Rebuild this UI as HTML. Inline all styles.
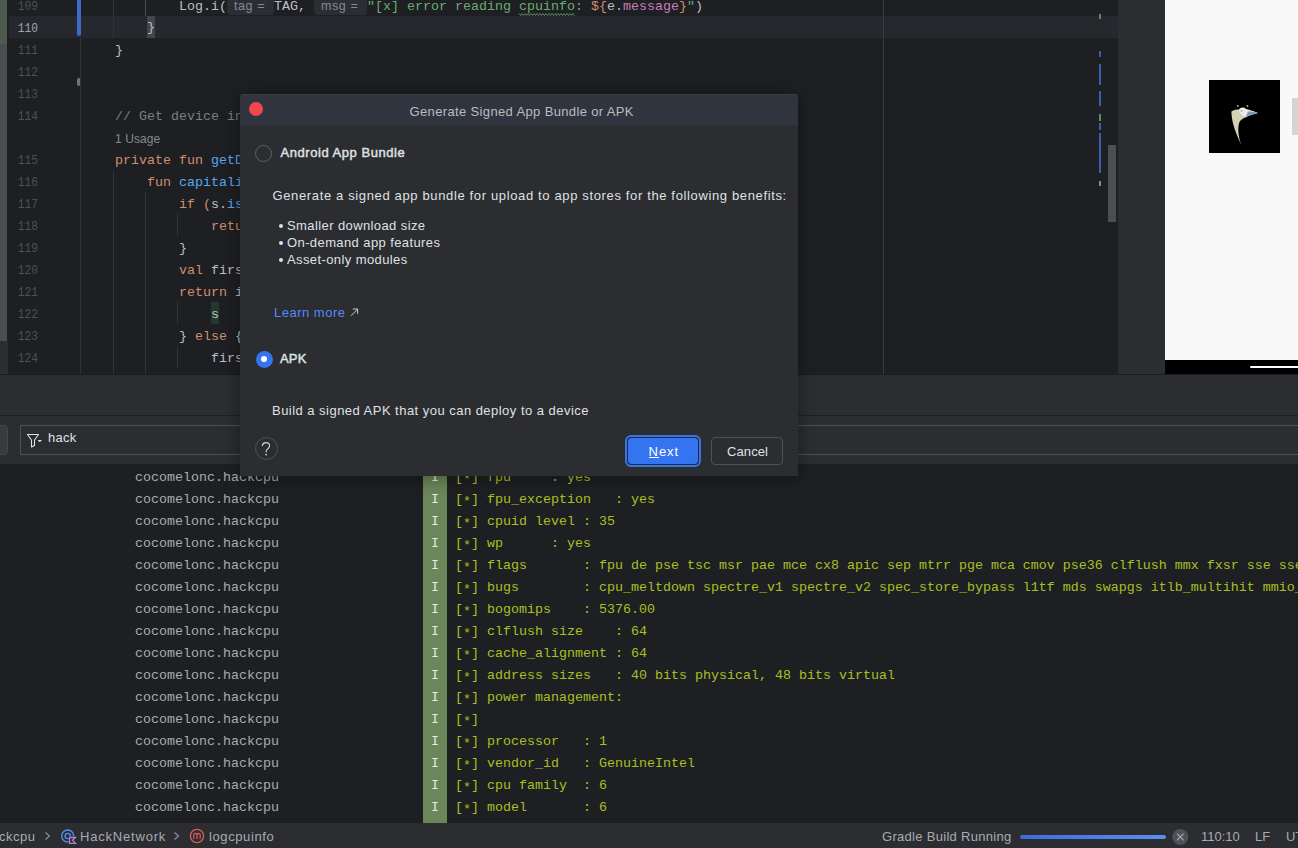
<!DOCTYPE html>
<html><head><meta charset="utf-8">
<style>
*{margin:0;padding:0;box-sizing:border-box}
html,body{width:1298px;height:848px;overflow:hidden;background:#1e1f22;font-family:"Liberation Sans",sans-serif}
.a{position:absolute}
.mono{font-family:"Liberation Mono",monospace;font-size:13.33px;white-space:pre;line-height:22px}
.ln{position:absolute;width:38px;text-align:right;font-family:"Liberation Mono",monospace;font-size:12.5px;line-height:22px;color:#4b5059;transform:scaleX(0.9);transform-origin:38px 0}
.k{color:#cf8e6d}.f{color:#56a8f5}.s{color:#6aab73}.d{color:#bcbec4}.c{color:#7a7e85}.p{color:#c77dbb}
.hint{display:inline-block;font-family:"Liberation Sans",sans-serif;font-size:12.5px;letter-spacing:0.6px;color:#868a91;background:#2c2e33;border-radius:4px;height:18px;line-height:18px;vertical-align:top;margin-top:1px;padding:0 0 0 7px}
.typo{}
.brace{display:inline-block;height:22px;width:8px;vertical-align:top;margin-top:-2px;line-height:23px;background:#43454a}
.shl{display:inline-block;height:22px;vertical-align:top;margin-top:-2px;line-height:26px;background:#203b2d}
.log{color:#a8c023}
.pkg{color:#a9abb1}
.badge{color:#e8e8e8}
.dt{position:absolute;white-space:pre;color:#dfe1e5;font-size:13px;line-height:16px}
</style></head>
<body>
<!-- EDITOR -->
<div class="a" style="left:0;top:0;width:1118px;height:374px;background:#1e1f22;overflow:hidden">
  <div class="a" style="left:0;top:0;width:7px;height:44px;background:#4d5a4d"></div>
  <div class="a" style="left:0;top:44px;width:7px;height:297px;background:#4b4d52"></div>
  <div class="a" style="left:0;top:341px;width:8px;height:33px;background:#2b2d30"></div>
  <div class="a" style="left:9px;top:16px;width:1109px;height:22px;background:#26282e"></div>
  <div class="ln" style="left:0;top:-4px;color:#4b5059">109</div>
<div class="ln" style="left:0;top:18px;color:#a1a3ab">110</div>
<div class="ln" style="left:0;top:40px;color:#4b5059">111</div>
<div class="ln" style="left:0;top:62px;color:#4b5059">112</div>
<div class="ln" style="left:0;top:84px;color:#4b5059">113</div>
<div class="ln" style="left:0;top:106px;color:#4b5059">114</div>
<div class="ln" style="left:0;top:150px;color:#4b5059">115</div>
<div class="ln" style="left:0;top:172px;color:#4b5059">116</div>
<div class="ln" style="left:0;top:194px;color:#4b5059">117</div>
<div class="ln" style="left:0;top:216px;color:#4b5059">118</div>
<div class="ln" style="left:0;top:238px;color:#4b5059">119</div>
<div class="ln" style="left:0;top:260px;color:#4b5059">120</div>
<div class="ln" style="left:0;top:282px;color:#4b5059">121</div>
<div class="ln" style="left:0;top:304px;color:#4b5059">122</div>
<div class="ln" style="left:0;top:326px;color:#4b5059">123</div>
<div class="ln" style="left:0;top:348px;color:#4b5059">124</div>
<div class="ln" style="left:0;top:370px;color:#4b5059">125</div>
  <div class="a" style="left:77px;top:0;width:4px;height:36px;background:#3d6acb;border-radius:0 0 2px 2px"></div>
  <div class="a" style="left:77px;top:78px;width:4px;height:8px;background:#6f737a;border-radius:2px"></div>
  <div class="a" style="left:80px;top:38px;width:1px;height:336px;background:#303236"></div>
  <div class="a" style="left:113px;top:0;width:1px;height:38px;background:#313338"></div>
  <div class="a" style="left:145px;top:0;width:1px;height:16px;background:#4e5055"></div>
  <div class="a" style="left:113px;top:170px;width:1px;height:204px;background:#313338"></div>
  <div class="a" style="left:145px;top:192px;width:1px;height:182px;background:#313338"></div>
  <div class="a" style="left:177px;top:214px;width:1px;height:22px;background:#313338"></div>
  <div class="a" style="left:177px;top:302px;width:1px;height:22px;background:#313338"></div>
  <div class="a" style="left:177px;top:346px;width:1px;height:22px;background:#313338"></div>
  <div class="a" style="left:883px;top:0;width:1px;height:374px;background:#393b40"></div>
  <svg class="a" style="left:0;top:0" width="600" height="20"><polyline points="519.0,13.5 520.5,15.5 522.0,13.5 523.5,15.5 525.0,13.5 526.5,15.5 528.0,13.5 529.5,15.5 531.0,13.5 532.5,15.5 534.0,13.5 535.5,15.5 537.0,13.5 538.5,15.5 540.0,13.5 541.5,15.5 543.0,13.5 544.5,15.5 546.0,13.5 547.5,15.5 549.0,13.5 550.5,15.5 552.0,13.5 553.5,15.5 555.0,13.5 556.5,15.5 558.0,13.5 559.5,15.5 561.0,13.5 562.5,15.5 564.0,13.5 565.5,15.5 567.0,13.5 568.5,15.5 570.0,13.5 571.5,15.5 573.0,13.5 574.5,15.5" fill="none" stroke="#5f9967" stroke-width="0.9"/></svg>
  <div class="a mono d" style="left:83px;top:-4px"><span class="d">            Log.i(</span><span class="hint" style="width:47px">tag =</span><span class="d">TAG, </span><span class="hint" style="width:53px">msg =</span><span class="s">&quot;[x] error reading </span><span class="s typo">cpuinfo</span><span class="s">: </span><span class="k">${</span><span class="d">e.</span><span class="p">message</span><span class="k">}</span><span class="s">&quot;</span><span class="d">)</span></div>
<div class="a mono d" style="left:83px;top:18px"><span class="d">        </span><span class="brace">}</span></div>
<div class="a mono d" style="left:83px;top:40px"><span class="d">    }</span></div>
<div class="a mono d" style="left:83px;top:62px"></div>
<div class="a mono d" style="left:83px;top:84px"></div>
<div class="a mono d" style="left:83px;top:106px"><span class="c">    // Get device in</span></div>
<div class="a" style="left:115px;top:128px;height:22px;line-height:22px;font-size:12px;color:#868a91;letter-spacing:0.1px">1 Usage</div>
<div class="a mono d" style="left:83px;top:150px"><span class="k">    private fun </span><span class="f">getD</span></div>
<div class="a mono d" style="left:83px;top:172px"><span class="k">        fun </span><span class="f">capitali</span></div>
<div class="a mono d" style="left:83px;top:194px"><span class="k">            if </span><span class="k">(</span><span class="d">s.</span><span class="f">is</span></div>
<div class="a mono d" style="left:83px;top:216px"><span class="k">                retu</span></div>
<div class="a mono d" style="left:83px;top:238px"><span class="d">            }</span></div>
<div class="a mono d" style="left:83px;top:260px"><span class="k">            val </span><span class="d">firs</span></div>
<div class="a mono d" style="left:83px;top:282px"><span class="k">            return </span><span class="d">i</span></div>
<div class="a mono d" style="left:83px;top:304px"><span class="d">                </span><span class="shl">s</span></div>
<div class="a mono d" style="left:83px;top:326px"><span class="d">            } </span><span class="k">else </span><span class="d">{</span></div>
<div class="a mono d" style="left:83px;top:348px"><span class="d">                firs</span></div>
<div class="a mono d" style="left:83px;top:370px"><span class="d">            }</span></div>
  <div class="a" style="left:1099px;top:14px;width:2px;height:5px;background:#549159"></div>
  <div class="a" style="left:1099px;top:51px;width:2px;height:6px;background:#375fad"></div>
  <div class="a" style="left:1099px;top:64px;width:2px;height:21px;background:#375fad"></div>
  <div class="a" style="left:1099px;top:91px;width:2px;height:15px;background:#375fad"></div>
  <div class="a" style="left:1099px;top:114px;width:2px;height:7px;background:#549159"></div>
  <div class="a" style="left:1099px;top:123px;width:2px;height:7px;background:#375fad"></div>
  <div class="a" style="left:1099px;top:133px;width:2px;height:40px;background:#375fad"></div>
  <div class="a" style="left:1099px;top:181px;width:2px;height:5px;background:#868a91"></div>
  <div class="a" style="left:1108px;top:145px;width:8px;height:77px;background:#4d4e51"></div>
</div>
<div class="a" style="left:1118px;top:0;width:47px;height:374px;background:#2b2d30"></div>
<div class="a" style="left:1165px;top:0;width:133px;height:374px;background:#000;overflow:hidden">
  <div class="a" style="left:0;top:0;width:133px;height:360px;background:#f9f9f9"></div>
  <svg class="a" style="left:44px;top:80px" width="71" height="73" viewBox="0 0 71 73"><rect width="71" height="73" fill="#000"/>
  <path d="M22.4 31.6 C22.5 38 24 48 32.3 64.9 C29 56 28.5 47 30.5 42 C32 39 40 35 48.6 33 C43 31 38 30 33 29.5 C29 29 25 30 22.4 31.6 Z" fill="#d3d0b4"/>
  <path d="M30 30 C31 27 35 27 37 29 C41 30 45 31 48.6 33 C44 34 40 35.5 36 37 C33 35 30 33 30 30 Z" fill="#e6ebee"/>
  <path d="M39 31.5 C43 31.5 46 32 49 33 C45 34.5 41 35.5 37 36.5 Z" fill="#7d98ac"/>
  <circle cx="32.5" cy="31" r="1" fill="#d9a0a0"/>
  <circle cx="28.8" cy="26" r="0.9" fill="#b8c040"/><circle cx="38.5" cy="26" r="0.9" fill="#b8c040"/>
</svg>
  <div class="a" style="left:127px;top:98px;width:6px;height:37px;background:#d5d5d5"></div>
  <div class="a" style="left:85px;top:366px;width:60px;height:2px;background:#fff;border-radius:1px"></div>
</div>

<!-- BOTTOM PANEL -->
<div class="a" style="left:0;top:374px;width:1298px;height:1px;background:#1b1c1f"></div>
<div class="a" style="left:0;top:375px;width:1298px;height:40px;background:#2b2d30"></div>
<div class="a" style="left:0;top:415px;width:1298px;height:1px;background:#1e1f22"></div>
<div class="a" style="left:0;top:416px;width:1298px;height:48px;background:#2b2d30"></div>
<div class="a" style="left:-6px;top:425px;width:14px;height:30px;background:#393b40;border:1px solid #43454a;border-radius:4px"></div>
<div class="a" style="left:20px;top:425px;width:1300px;height:30px;border:1px solid #4e5157"></div>
<svg class="a" style="left:25px;top:432px" width="20" height="18" viewBox="0 0 20 18">
  <path d="M2.5 2.5 H13.5 L9.5 8 V13.5 L6.5 15 V8 Z" fill="none" stroke="#dfe1e5" stroke-width="1.1" stroke-linejoin="round"/>
  <path d="M12.5 8 H17 L14.75 10.2 Z" fill="#dfe1e5"/>
</svg>
<div class="a" style="left:48px;top:430px;font-size:13px;color:#dfe1e5;line-height:16px;letter-spacing:0.3px">hack</div>

<!-- LOGCAT -->
<div class="a" style="left:0;top:464px;width:1298px;height:359px;background:#1e1f22;overflow:hidden">
  <div class="a" style="left:423px;top:0;width:24px;height:359px;background:#6a8759"></div>
  <div class="a mono pkg" style="left:135px;top:3px">cocomelonc.hackcpu</div>
<div class="a mono badge" style="left:431px;top:3px">I</div>
<div class="a mono log" style="left:455px;top:3px">[<span style="position:relative;top:2px">*</span>] fpu     : yes</div>
<div class="a mono pkg" style="left:135px;top:25px">cocomelonc.hackcpu</div>
<div class="a mono badge" style="left:431px;top:25px">I</div>
<div class="a mono log" style="left:455px;top:25px">[<span style="position:relative;top:2px">*</span>] fpu_exception   : yes</div>
<div class="a mono pkg" style="left:135px;top:47px">cocomelonc.hackcpu</div>
<div class="a mono badge" style="left:431px;top:47px">I</div>
<div class="a mono log" style="left:455px;top:47px">[<span style="position:relative;top:2px">*</span>] cpuid level : 35</div>
<div class="a mono pkg" style="left:135px;top:69px">cocomelonc.hackcpu</div>
<div class="a mono badge" style="left:431px;top:69px">I</div>
<div class="a mono log" style="left:455px;top:69px">[<span style="position:relative;top:2px">*</span>] wp      : yes</div>
<div class="a mono pkg" style="left:135px;top:91px">cocomelonc.hackcpu</div>
<div class="a mono badge" style="left:431px;top:91px">I</div>
<div class="a mono log" style="left:455px;top:91px">[<span style="position:relative;top:2px">*</span>] flags       : fpu de pse tsc msr pae mce cx8 apic sep mtrr pge mca cmov pse36 clflush mmx fxsr sse sse2 ss ht syscall nx</div>
<div class="a mono pkg" style="left:135px;top:113px">cocomelonc.hackcpu</div>
<div class="a mono badge" style="left:431px;top:113px">I</div>
<div class="a mono log" style="left:455px;top:113px">[<span style="position:relative;top:2px">*</span>] bugs        : cpu_meltdown spectre_v1 spectre_v2 spec_store_bypass l1tf mds swapgs itlb_multihit mmio_stale_data</div>
<div class="a mono pkg" style="left:135px;top:135px">cocomelonc.hackcpu</div>
<div class="a mono badge" style="left:431px;top:135px">I</div>
<div class="a mono log" style="left:455px;top:135px">[<span style="position:relative;top:2px">*</span>] bogomips    : 5376.00</div>
<div class="a mono pkg" style="left:135px;top:157px">cocomelonc.hackcpu</div>
<div class="a mono badge" style="left:431px;top:157px">I</div>
<div class="a mono log" style="left:455px;top:157px">[<span style="position:relative;top:2px">*</span>] clflush size    : 64</div>
<div class="a mono pkg" style="left:135px;top:179px">cocomelonc.hackcpu</div>
<div class="a mono badge" style="left:431px;top:179px">I</div>
<div class="a mono log" style="left:455px;top:179px">[<span style="position:relative;top:2px">*</span>] cache_alignment : 64</div>
<div class="a mono pkg" style="left:135px;top:201px">cocomelonc.hackcpu</div>
<div class="a mono badge" style="left:431px;top:201px">I</div>
<div class="a mono log" style="left:455px;top:201px">[<span style="position:relative;top:2px">*</span>] address sizes   : 40 bits physical, 48 bits virtual</div>
<div class="a mono pkg" style="left:135px;top:223px">cocomelonc.hackcpu</div>
<div class="a mono badge" style="left:431px;top:223px">I</div>
<div class="a mono log" style="left:455px;top:223px">[<span style="position:relative;top:2px">*</span>] power management:</div>
<div class="a mono pkg" style="left:135px;top:245px">cocomelonc.hackcpu</div>
<div class="a mono badge" style="left:431px;top:245px">I</div>
<div class="a mono log" style="left:455px;top:245px">[<span style="position:relative;top:2px">*</span>]</div>
<div class="a mono pkg" style="left:135px;top:267px">cocomelonc.hackcpu</div>
<div class="a mono badge" style="left:431px;top:267px">I</div>
<div class="a mono log" style="left:455px;top:267px">[<span style="position:relative;top:2px">*</span>] processor   : 1</div>
<div class="a mono pkg" style="left:135px;top:289px">cocomelonc.hackcpu</div>
<div class="a mono badge" style="left:431px;top:289px">I</div>
<div class="a mono log" style="left:455px;top:289px">[<span style="position:relative;top:2px">*</span>] vendor_id   : GenuineIntel</div>
<div class="a mono pkg" style="left:135px;top:311px">cocomelonc.hackcpu</div>
<div class="a mono badge" style="left:431px;top:311px">I</div>
<div class="a mono log" style="left:455px;top:311px">[<span style="position:relative;top:2px">*</span>] cpu family  : 6</div>
<div class="a mono pkg" style="left:135px;top:333px">cocomelonc.hackcpu</div>
<div class="a mono badge" style="left:431px;top:333px">I</div>
<div class="a mono log" style="left:455px;top:333px">[<span style="position:relative;top:2px">*</span>] model       : 6</div>
</div>

<!-- STATUS BAR -->
<div class="a" style="left:0;top:823px;width:1298px;height:25px;background:#2b2d30;color:#a9abb1;font-size:13px;line-height:16px;white-space:nowrap;overflow:hidden">
  <div class="a" style="left:-16.5px;top:6px;letter-spacing:0.5px">hackcpu</div>
  <svg class="a" style="left:43px;top:8px" width="10" height="10" viewBox="0 0 10 10"><path d="M2.5 1.5 L6.5 5 L2.5 8.5" fill="none" stroke="#8c8f96" stroke-width="1.2"/></svg>
  <svg class="a" style="left:60px;top:5px" width="18" height="18" viewBox="0 0 18 18">
    <circle cx="7.7" cy="8" r="6" fill="none" stroke="#548af7" stroke-width="1.4"/>
    <circle cx="7.7" cy="8" r="2.6" fill="none" stroke="#548af7" stroke-width="1.4"/>
    <rect x="8.5" y="8.5" width="8" height="8" fill="#2b2d30"/>
    <path d="M9.5 9.5 H15.5 L12.5 12.3 L15.5 15.3 H9.5 Z" fill="none" stroke="#b07fd6" stroke-width="1.3"/>
  </svg>
  <div class="a" style="left:80px;top:6px;letter-spacing:0.8px">HackNetwork</div>
  <svg class="a" style="left:172px;top:8px" width="10" height="10" viewBox="0 0 10 10"><path d="M2.5 1.5 L6.5 5 L2.5 8.5" fill="none" stroke="#8c8f96" stroke-width="1.2"/></svg>
  <svg class="a" style="left:189px;top:5px" width="16" height="16" viewBox="0 0 16 16">
    <circle cx="8" cy="8" r="6.6" fill="none" stroke="#db5c5c" stroke-width="1.3"/>
    <path d="M4.8 11 V6 M4.8 7 Q4.8 5.4 6.3 5.4 Q8 5.4 8 7 V11 M8 7 Q8 5.4 9.6 5.4 Q11.2 5.4 11.2 7 V11" fill="none" stroke="#db5c5c" stroke-width="1.2"/>
  </svg>
  <div class="a" style="left:209px;top:6px;letter-spacing:0.6px">logcpuinfo</div>
  <div class="a" style="left:882px;top:6px;letter-spacing:0.3px">Gradle Build Running</div>
  <div class="a" style="left:1020px;top:12px;width:146px;height:4px;border-radius:2px;background:linear-gradient(90deg,#3b6ed6,#5b8ef5)"></div>
  <svg class="a" style="left:1172px;top:6px" width="17" height="17" viewBox="0 0 17 17">
    <circle cx="8.3" cy="8" r="8" fill="#4e5157"/>
    <path d="M5 4.7 L11.6 11.3 M11.6 4.7 L5 11.3" stroke="#a9abb1" stroke-width="1.1"/>
  </svg>
  <div class="a" style="left:1201px;top:6px;letter-spacing:0px">110:10</div>
  <div class="a" style="left:1255px;top:6px">LF</div>
  <div class="a" style="left:1286px;top:6px">UTF-8</div>
</div>

<!-- DIALOG -->
<div class="a" style="left:240px;top:94px;width:558px;height:382px;background:#2b2d30;border-radius:3px 3px 0 0;overflow:hidden;box-shadow:0 2px 18px rgba(0,0,0,.4)">
  <div class="a" style="left:0;top:0;width:558px;height:31px;background:#30343e;border-top:1px solid #393d49"></div>
  <div class="a" style="left:9px;top:8px;width:14px;height:14px;border-radius:7px;background:#f0484e"></div>
  <div class="dt" style="left:169.5px;top:9.5px;color:#b9bcc2;letter-spacing:0.36px">Generate Signed App Bundle or APK</div>
  <div class="a" style="left:15px;top:50.5px;width:17px;height:17px;border-radius:9px;border:1px solid #5e6167"></div>
  <div class="dt" style="left:40.5px;top:51px;-webkit-text-stroke:0.45px #dfe1e5;letter-spacing:0.55px">Android App Bundle</div>
  <div class="dt" style="left:32.5px;top:94.3px;letter-spacing:0.64px">Generate a signed app bundle for upload to app stores for the following benefits:</div>
  <div class="a" style="left:38.5px;top:130px;width:4px;height:4px;border-radius:2px;background:#dfe1e5"></div>
  <div class="a" style="left:38.5px;top:147px;width:4px;height:4px;border-radius:2px;background:#dfe1e5"></div>
  <div class="a" style="left:38.5px;top:164px;width:4px;height:4px;border-radius:2px;background:#dfe1e5"></div>
  <div class="dt" style="left:47px;top:124.3px;letter-spacing:0.4px">Smaller download size</div>
  <div class="dt" style="left:47px;top:141.3px;letter-spacing:0.4px">On-demand app features</div>
  <div class="dt" style="left:47px;top:158.2px;letter-spacing:0.4px">Asset-only modules</div>
  <div class="dt" style="left:34px;top:210.8px;color:#548af7;letter-spacing:0.5px">Learn more</div>
  <svg class="a" style="left:108px;top:212px" width="12" height="12" viewBox="0 0 12 12"><path d="M3 9.8 L9.6 3.2 M4.8 3 H9.6 V7.8" fill="none" stroke="#ced0d6" stroke-width="1"/></svg>
  <div class="a" style="left:15.5px;top:256.5px;width:17px;height:17px;border-radius:9px;background:#3574f0"></div>
  <div class="a" style="left:21px;top:262px;width:6px;height:6px;border-radius:3px;background:#fff"></div>
  <div class="dt" style="left:40px;top:257.2px;-webkit-text-stroke:0.45px #dfe1e5;letter-spacing:0.2px">APK</div>
  <div class="dt" style="left:32px;top:308.6px;letter-spacing:0.47px">Build a signed APK that you can deploy to a device</div>
  <div class="a" style="left:15px;top:343px;width:23px;height:23px;border-radius:12px;border:1px solid #4e5157"></div>
  <svg class="a" style="left:15px;top:344.5px" width="23" height="23" viewBox="0 0 23 23"><path d="M7.3 6.6 C7.6 4.6 9 3.6 11 3.6 C13.2 3.6 14.6 5 14.6 6.8 C14.6 8.6 13.3 9.4 12.2 10.4 C11.4 11.1 11.1 11.8 11.1 13" fill="none" stroke="#ced0d6" stroke-width="1.1" stroke-linecap="round"/><circle cx="11.1" cy="15.6" r="0.85" fill="#ced0d6"/></svg>
  <div class="a" style="left:385px;top:341px;width:76px;height:32px;border-radius:6px;border:2px solid #3574f0;background:#2b2d30"></div>
  <div class="a" style="left:388px;top:344px;width:70px;height:26px;border-radius:4px;background:#3574f0"></div>
  <div class="dt" style="left:408.5px;top:349.8px;color:#fff;letter-spacing:1px">Next</div>
  <div class="a" style="left:409px;top:363.2px;width:10px;height:1.2px;background:#fff"></div>
  <div class="a" style="left:471px;top:343px;width:72px;height:28px;border-radius:4px;border:1px solid #4e5157"></div>
  <div class="dt" style="left:487px;top:349.8px;letter-spacing:0.1px">Cancel</div>
</div>
</body></html>
